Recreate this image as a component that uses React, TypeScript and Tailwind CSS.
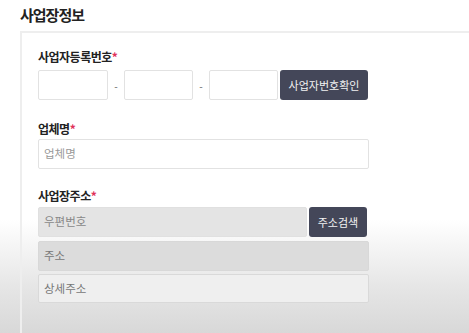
import React from "react";

const font = { fontFamily: '"Noto Sans CJK KR", "Noto Sans", sans-serif' };

export default function App() {
  return (
    <div
      className="w-[469px] h-[333px] overflow-hidden bg-[linear-gradient(to_bottom,#ffffff_0%,#ffffff_66%,#e6e6e6_86%,#d8d8d8_100%)]"
      style={font}
    >
      <div className="pl-[20px] pt-[4px] text-[15px] font-bold text-[#222] leading-[21px] tracking-[-1px]">
        사업장정보
      </div>
      <div className="ml-[20px] mt-[6px] h-[320px] border-t-2 border-l-2 border-[#eeeeee] pl-[16px] pt-[15px]">
        <div className="text-[12px] font-bold text-[#222] leading-[18px] tracking-[-0.5px]">
          사업자등록번호<span className="text-[#e0315a]">*</span>
        </div>
        <div className="mt-[4px] flex items-center">
          <div className="w-[70px] h-[30px] border border-[#e2e2e2] rounded-[2px] bg-white" />
          <span className="w-[16px] text-center text-[10px] text-[#666]">-</span>
          <div className="w-[69px] h-[30px] border border-[#e2e2e2] rounded-[2px] bg-white" />
          <span className="w-[16px] text-center text-[10px] text-[#666]">-</span>
          <div className="w-[69px] h-[30px] border border-[#e2e2e2] rounded-[2px] bg-white" />
          <div className="ml-[2px] w-[88px] h-[30px] rounded-[3px] bg-[#444759] text-[#f2f2f2] text-[11px] flex items-center justify-center">
            사업자번호확인
          </div>
        </div>
        <div className="mt-[20px] text-[12px] font-bold text-[#222] leading-[18px] tracking-[-0.5px]">
          업체명<span className="text-[#e0315a]">*</span>
        </div>
        <div className="mt-[1px] w-[331px] h-[30px] border border-[#e2e2e2] rounded-[2px] bg-white flex items-center pl-[5px] text-[11.5px] text-[#999]">
          업체명
        </div>
        <div className="mt-[18px] text-[12px] font-bold text-[#222] leading-[18px] tracking-[-0.5px]">
          사업장주소<span className="text-[#e0315a]">*</span>
        </div>
        <div className="mt-[2px] flex gap-[2px]">
          <div className="w-[269px] h-[30px] rounded-[2px] bg-[#e4e4e4] border border-[#e0e0e0] flex items-center pl-[5px] text-[11.5px] text-[#888]">
            우편번호
          </div>
          <div className="w-[58px] h-[30px] rounded-[3px] bg-[#444759] text-[#f2f2f2] text-[11px] flex items-center justify-center">
            주소검색
          </div>
        </div>
        <div className="mt-[4px] w-[331px] h-[30px] rounded-[2px] bg-[#dcdcdc] border border-[#d8d8d8] flex items-center pl-[5px] text-[11.5px] text-[#777]">
          주소
        </div>
        <div className="mt-[3px] w-[331px] h-[29px] rounded-[2px] bg-[#efefef] border border-[#d9d9d9] flex items-center pl-[5px] text-[11.5px] text-[#777]">
          상세주소
        </div>
      </div>
    </div>
  );
}
